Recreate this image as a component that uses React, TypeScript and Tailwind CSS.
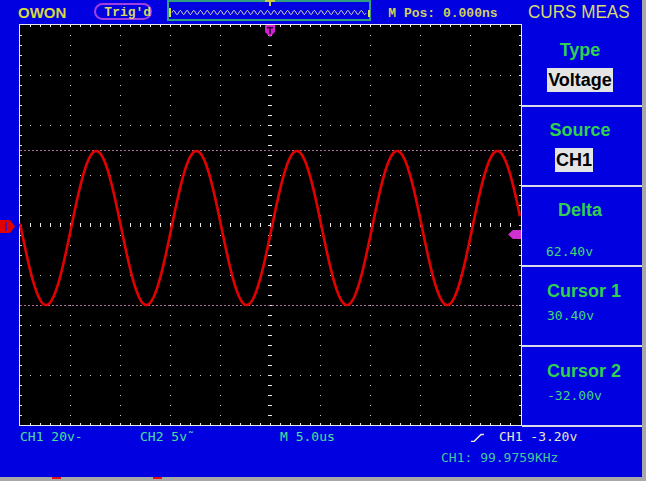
const PERIOD = 100.3;

function tracePath() {
  let d = '';
  for (let x = 20; x <= 520; x += 0.5) {
    const y = 228 + 77 * Math.cos((2 * Math.PI * (x - 46)) / PERIOD);
    d += (x === 20 ? 'M' : 'L') + x.toFixed(1) + ' ' + y.toFixed(2) + ' ';
  }
  return d;
}

function ripplePath() {
  let d = '';
  for (let x = 5; x <= 199; x += 0.5) {
    const y = 12.5 - 2 * Math.sin((2 * Math.PI * (x - 5)) / 6.7);
    d += (x === 5 ? 'M' : 'L') + x.toFixed(1) + ' ' + y.toFixed(2) + ' ';
  }
  return d;
}

function TimeBase() {
  return (
    <svg width={204} height={21} className="block shrink-0 ml-[15px]">
      <rect x={1} y={1} width={202} height={19} fill="none" stroke="#2f9f7f" strokeWidth={2} />
      <path d={ripplePath()} fill="none" stroke="#eeeec0" strokeWidth={1} />
      <rect x={2} y={8} width={2} height={9} fill="#e0e040" />
      <rect x={201} y={10} width={2} height={7} fill="#e0e040" />
      <rect x={98} y={0} width={10} height={2} fill="#c8d040" />
      <rect x={102} y={0} width={2} height={6} fill="#c8d040" />
    </svg>
  );
}

function Header() {
  return (
    <div className="h-[24px] flex items-start shrink-0">
      <span className="ml-[18px] mt-[4px] text-[15px] leading-[18px] font-bold text-[#d8d840] font-['Liberation_Sans',Arial,sans-serif]">
        OWON
      </span>
      <div className="ml-[28px] mt-[3px] w-[58px] h-[17px] rounded-full border-2 border-[#a040e0] pl-[8px] pt-[1px]">
        <span className="block text-[13px] leading-[13px] font-bold text-[#d8d860] font-['Liberation_Mono',monospace]">
          Trig'd
        </span>
      </div>
      <TimeBase />
      <span className="ml-[17px] mt-[7px] text-[13px] leading-[13px] font-bold text-[#d0d060] font-['Liberation_Mono',monospace] whitespace-pre">
        M Pos: 0.000ns
      </span>
      <span className="ml-[30px] mt-[1px] text-[19px] leading-[22px] text-[#d8d870] font-['Liberation_Sans',Arial,sans-serif] scale-x-[0.9] origin-left whitespace-nowrap">
        CURS MEAS
      </span>
    </div>
  );
}

function Scope() {
  const vx = [70, 120, 170, 220, 320, 370, 420, 470];
  const hy = [75, 125, 175, 275, 325, 375];
  const tx = Array.from({ length: 49 }, (_, i) => 30 + i * 10);
  const ty = Array.from({ length: 39 }, (_, i) => 35 + i * 10);
  return (
    <svg width={503} height={402} viewBox="19 24 503 402" className="block shrink-0">
      <rect x={19} y={24} width={503} height={402} fill="#000" />
      <rect x={19.5} y={24.5} width={502} height={401} fill="none" stroke="#e8e8e8" />
      {vx.map((x) => (
        <line key={'v' + x} x1={x + 0.5} y1={35} x2={x + 0.5} y2={425} stroke="#c8c8c8" strokeDasharray="1 9" />
      ))}
      {hy.map((y) => (
        <line key={'h' + y} x1={30} y1={y + 0.5} x2={520} y2={y + 0.5} stroke="#c8c8c8" strokeDasharray="1 9" />
      ))}
      {tx.map((x) => (
        <g key={'tx' + x} fill="#e8e8e8">
          <rect x={x} y={25} width={1} height={2} />
          <rect x={x} y={423} width={1} height={2} />
          <rect x={x} y={223} width={1} height={4} />
        </g>
      ))}
      {ty.map((y) => (
        <g key={'ty' + y} fill="#e8e8e8">
          <rect x={20} y={y} width={2} height={1} />
          <rect x={519} y={y} width={2} height={1} />
          <rect x={268} y={y} width={4} height={1} />
        </g>
      ))}
      <line x1={20} y1={150.5} x2={520} y2={150.5} stroke="#b06898" strokeDasharray="2 2" />
      <line x1={20} y1={305.5} x2={520} y2={305.5} stroke="#b06898" strokeDasharray="2 2" />
      <path d={tracePath()} fill="none" stroke="#e20000" strokeWidth={2.6} strokeLinejoin="round" />
      <polygon points="265,25 275,25 275,32 270,37 265,32" fill="#d020d0" />
      <rect x={267} y={27} width={6} height={1.5} fill="#300030" />
      <rect x={269.3} y={27} width={1.5} height={7} fill="#300030" />
      <polygon points="521,230 521,239 513,239 508,234.5 513,230" fill="#d030d0" />
    </svg>
  );
}

function ChannelMarker() {
  return (
    <svg width={16} height={13} className="block">
      <polygon points="0,0 10,0 15,6.5 10,13 0,13" fill="#e00000" />
      <rect x={5} y={2} width={2} height={9} fill="#5010a0" />
    </svg>
  );
}

const head = "text-[18px] leading-[22px] font-bold text-[#30d050] font-['Liberation_Sans',Arial,sans-serif]";
const val = "text-[13px] leading-[16px] text-[#40d878] font-['DejaVu_Sans_Mono',monospace] whitespace-pre";
const box = "bg-[#e4e4e4] text-black text-[18px] leading-[24px] font-bold px-[1px] font-['Liberation_Sans',Arial,sans-serif]";

function Menu() {
  return (
    <div className="w-[120px] shrink-0 pt-[3px] flex flex-col">
      <div className="h-[80px] border-b-2 border-[#d8d8e8] pt-[12px] pr-[4px] flex flex-col items-center">
        <div className={head}>Type</div>
        <div className={`mt-[7px] ${box}`}>Voltage</div>
      </div>
      <div className="h-[80px] border-b-2 border-[#d8d8e8] pt-[12px] pr-[4px] flex flex-col items-center">
        <div className={head}>Source</div>
        <div className={`mt-[7px] mr-[12px] ${box}`}>CH1</div>
      </div>
      <div className="h-[80px] border-b-2 border-[#d8d8e8] pt-[12px] flex flex-col">
        <div className={`${head} text-center pr-[4px]`}>Delta</div>
        <div className={`mt-[23px] pl-[24px] ${val}`}>62.40v</div>
      </div>
      <div className="h-[80px] border-b-2 border-[#d8d8e8] pt-[13px] pl-[25px] flex flex-col">
        <div className={head}>Cursor 1</div>
        <div className={`mt-[6px] ${val}`}>30.40v</div>
      </div>
      <div className="h-[80px] border-b-2 border-[#d8d8e8] pt-[13px] pl-[25px] flex flex-col">
        <div className={head}>Cursor 2</div>
        <div className={`mt-[6px] ${val}`}>-32.00v</div>
      </div>
    </div>
  );
}

function Footer() {
  return (
    <div className="flex-1 pt-[2px] text-[13px] leading-[16px] font-['DejaVu_Sans_Mono',monospace] whitespace-pre">
      <div className="flex">
        <span className="ml-[20px] w-[120px] shrink-0 text-[#48e098]">CH1 20v-</span>
        <span className="w-[140px] shrink-0 text-[#48e098]">CH2 5v˜</span>
        <span className="w-[191px] shrink-0 text-[#48e098]">M 5.0us</span>
        <svg width={13} height={9} className="block shrink-0 mt-[4px]">
          <path d="M0 8.5 H3 L10 1.5 H13" fill="none" stroke="#e8e8c8" strokeWidth={1.5} />
        </svg>
        <span className="ml-[15px] text-[#e8e8c8]">CH1 -3.20v</span>
      </div>
      <div className="mt-[5px] ml-[441px] text-[#40c8a0]">CH1: 99.9759KHz</div>
    </div>
  );
}

export default function App() {
  return (
    <div className="w-[646px] h-[481px] bg-[#a8a8a8] flex flex-col overflow-hidden">
      <div className="w-[642px] h-[477px] bg-[#0000e0] flex flex-col shrink-0">
        <Header />
        <div className="flex h-[403px] shrink-0">
          <div className="w-[19px] shrink-0 pt-[196px]">
            <ChannelMarker />
          </div>
          <Scope />
          <Menu />
        </div>
        <Footer />
      </div>
      <div className="h-[4px] flex">
        <div className="ml-[52px] w-[9px] h-[2px] bg-[#e01010]" />
        <div className="ml-[92px] w-[9px] h-[2px] bg-[#e01010]" />
      </div>
    </div>
  );
}
